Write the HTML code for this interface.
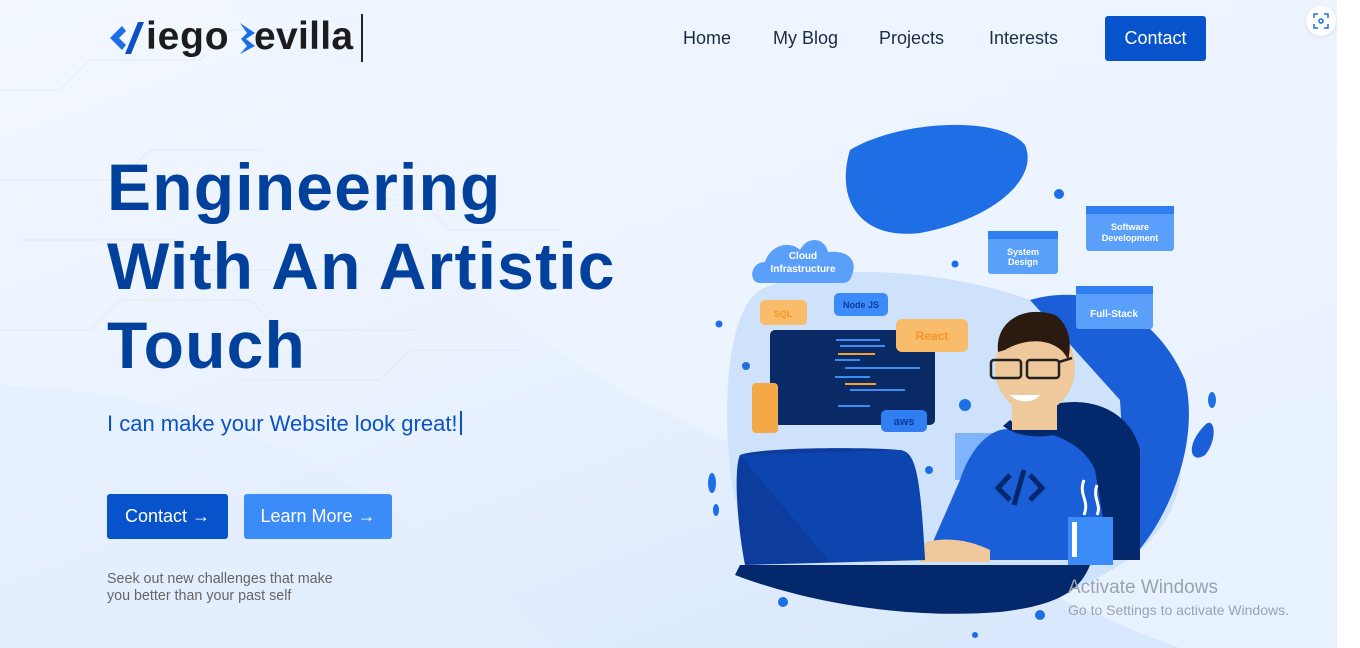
<!DOCTYPE html>
<html><head><meta charset="utf-8"><style>
*{margin:0;padding:0;box-sizing:border-box}
body{width:1360px;height:648px;overflow:hidden;background:#fff;font-family:"Liberation Sans",sans-serif;position:relative}
#pg{position:absolute;left:0;top:0;width:1337px;height:648px;background:linear-gradient(160deg,#f3f8ff 0%,#eaf2fe 45%,#d6e6fd 100%);overflow:hidden}
.nav a{position:absolute;top:28px;font-size:18px;color:#1b2a45;text-decoration:none}
h1{position:absolute;left:107px;top:148px;font-size:66px;line-height:79px;color:#01419b;font-weight:700;letter-spacing:1.2px}
.sub{position:absolute;left:107px;top:411px;font-size:22px;color:#0b52c4}
.btn{position:absolute;top:494px;height:45px;color:#fff;font-size:18px;line-height:45px;text-align:center;border-radius:3px}
.small{position:absolute;left:107px;top:571px;font-size:14.3px;line-height:17px;color:#666}
</style></head><body>
<div id="pg">
<svg width="1337" height="648" style="position:absolute;left:0;top:0">
<path d="M230 0 C330 160 480 330 700 430 C900 520 1050 600 1180 648 L1337 648 L1337 0Z" fill="#eef5ff" opacity=".7"/>
<path d="M0 385 C200 390 380 470 560 648 L0 648Z" fill="#e3eefd" opacity=".6"/>
<g stroke="#dfe8f4" stroke-width="1.2" fill="none" opacity=".7">
<path d="M0 90 H60 L90 60 H200 L230 30 H330"/><path d="M0 180 H120 L150 150 H260"/><path d="M20 240 H180 L210 270 H320"/><path d="M0 330 H90 L120 300 H250 L280 330 H420"/><path d="M240 380 H380 L410 350 H520"/><path d="M300 200 H420 L450 230 H560"/>
</g>
</svg>
<!-- logo -->
<svg width="40" height="36" style="position:absolute;left:108px;top:20px"><path d="M14 6 L2 18 L14 30 L18 25 L11 18 L18 11Z" fill="#1d6fe8"/><path d="M30 2 L17 34 L23 34 L36 2Z" fill="#0b4fc4"/></svg>
<div style="position:absolute;left:146px;top:15px;font-size:39px;font-weight:700;color:#1c1c1c;letter-spacing:0.8px">iego</div>
<svg width="22" height="36" style="position:absolute;left:237px;top:20px"><path d="M3 3 L18 13 L9 19 L18 26 L3 34 L10 26 L4 19 L10 13Z" fill="#1d6fe8"/></svg>
<div style="position:absolute;left:254px;top:15px;font-size:39px;font-weight:700;color:#1c1c1c;letter-spacing:0.3px">evilla</div>
<div style="position:absolute;left:361px;top:14px;width:1.5px;height:48px;background:#222"></div>
<div class="nav"><a style="left:683px">Home</a><a style="left:773px">My Blog</a><a style="left:879px">Projects</a><a style="left:989px">Interests</a></div>
<div style="position:absolute;left:1105px;top:16px;width:101px;height:45px;background:#0753cc;border-radius:3px;color:#fff;font-size:18px;line-height:45px;text-align:center">Contact</div>
<h1>Engineering<br>With An Artistic<br>Touch</h1>
<div class="sub">I can make your Website look great!<span style="display:inline-block;width:2px;height:24px;background:#0b52c4;vertical-align:-4px;margin-left:2px"></span></div>
<div class="btn" style="left:107px;width:121px;background:#0753cc">Contact →</div>
<div class="btn" style="left:244px;width:148px;background:#3b8bf9">Learn More →</div>
<div class="small">Seek out new challenges that make<br>you better than your past self</div>
<!-- illustration -->
<svg width="530" height="520" viewBox="700 120 530 520" style="position:absolute;left:700px;top:120px" font-family="Liberation Sans" font-weight="700">
<path d="M760 290 C820 260 950 270 1030 300 C1110 330 1190 400 1180 480 C1170 560 1060 615 920 612 C800 610 740 560 730 470 C722 390 730 310 760 290Z" fill="#cfe2fc"/>
<path d="M1030 300 C1100 280 1160 320 1185 380 C1200 440 1170 520 1130 560 L1120 400Z" fill="#1a5fd8"/>
<path d="M850 150 C900 120 1000 115 1025 145 C1040 180 990 220 920 233 C860 240 835 200 850 150Z" fill="#1e6ee6"/>
<ellipse cx="873" cy="152" rx="14" ry="6" fill="#1e6ee6" transform="rotate(-20 873 152)"/>
<path d="M735 575 C800 600 900 620 1000 612 C1060 605 1080 590 1090 565 L740 565Z" fill="#03286b"/>
<rect x="770" y="330" width="165" height="95" rx="5" fill="#0a2a66"/>
<g stroke="#3f8cf0" stroke-width="2"><line x1="836" y1="340" x2="880" y2="340"/><line x1="840" y1="346" x2="885" y2="346"/><line x1="835" y1="360" x2="860" y2="360"/><line x1="845" y1="368" x2="920" y2="368"/><line x1="835" y1="377" x2="870" y2="377"/><line x1="850" y1="390" x2="905" y2="390"/><line x1="838" y1="406" x2="870" y2="406"/></g>
<g stroke="#f5a030" stroke-width="2"><line x1="838" y1="354" x2="875" y2="354"/><line x1="845" y1="384" x2="876" y2="384"/></g>
<rect x="752" y="383" width="26" height="50" rx="4" fill="#f5a848"/>
<rect x="760" y="300" width="47" height="25" rx="5" fill="#f8bc6b"/><text x="783" y="317" font-size="9" fill="#f59a20" text-anchor="middle">SQL</text>
<rect x="834" y="293" width="54" height="23" rx="5" fill="#3b8bf9"/><text x="861" y="308" font-size="9" fill="#0b3a9b" text-anchor="middle">Node JS</text>
<rect x="896" y="319" width="72" height="33" rx="6" fill="#f8bc6b"/><text x="932" y="340" font-size="12" fill="#f5952a" text-anchor="middle">React</text>
<rect x="881" y="410" width="46" height="22" rx="5" fill="#2f7ff2"/><text x="904" y="425" font-size="11" fill="#0b3a9b" text-anchor="middle">aws</text>
<path d="M760 283 C748 283 750 262 765 262 C770 245 790 240 800 250 C808 235 825 238 828 252 C848 250 858 260 852 275 C850 283 845 283 840 283Z" fill="#5aa0fb"/>
<text x="803" y="259" font-size="10" fill="#fff" text-anchor="middle">Cloud</text><text x="803" y="272" font-size="10" fill="#fff" text-anchor="middle">Infrastructure</text>
<rect x="988" y="231" width="70" height="43" rx="3" fill="#5aa0fb"/><rect x="988" y="231" width="70" height="8" fill="#2f7ff2"/><text x="1023" y="255" font-size="9" fill="#fff" text-anchor="middle">System</text><text x="1023" y="265" font-size="9" fill="#fff" text-anchor="middle">Design</text>
<rect x="1086" y="206" width="88" height="45" rx="3" fill="#5aa0fb"/><rect x="1086" y="206" width="88" height="8" fill="#2f7ff2"/><text x="1130" y="230" font-size="9" fill="#fff" text-anchor="middle">Software</text><text x="1130" y="241" font-size="9" fill="#fff" text-anchor="middle">Development</text>
<rect x="1076" y="286" width="77" height="43" rx="3" fill="#5aa0fb"/><rect x="1076" y="286" width="77" height="8" fill="#2f7ff2"/><text x="1114" y="317" font-size="10" fill="#fff" text-anchor="middle">Full-Stack</text>
<path d="M1050 405 C1090 395 1130 410 1140 450 L1140 560 L1050 560Z" fill="#03286b"/>
<path d="M955 433 L1005 433 L1005 480 L955 480Z" fill="#7fb4fb"/>
<path d="M1000 430 C1030 425 1080 435 1095 470 L1110 560 L925 560 L960 480 C970 450 985 435 1000 430Z" fill="#1a5fd8"/>
<path d="M1003 426 C1020 440 1060 440 1075 425 L1068 420 C1050 432 1025 432 1010 420Z" fill="#03286b"/>
<rect x="1012" y="400" width="45" height="30" fill="#efc89c"/>
<ellipse cx="1035" cy="368" rx="40" ry="45" fill="#efc89c"/>
<path d="M998 352 C995 320 1025 305 1055 315 C1070 325 1072 345 1068 360 C1060 340 1030 335 1005 350Z" fill="#2b1a10"/>
<g fill="none" stroke="#222" stroke-width="2.5"><rect x="991" y="360" width="30" height="18" rx="3"/><rect x="1027" y="360" width="32" height="18" rx="3"/><line x1="1059" y1="362" x2="1072" y2="358"/></g>
<path d="M1010 395 C1020 405 1035 402 1040 395Z" fill="#fff"/>
<path d="M1010 475 L998 488 L1010 500 M1030 475 L1042 488 L1030 500 M1024 470 L1014 505" stroke="#03286b" stroke-width="5" fill="none"/>
<path d="M920 545 C940 535 970 540 990 550 L990 562 L920 562Z" fill="#efc89c"/>
<path d="M740 455 C760 447 870 447 900 450 C915 452 920 470 925 560 L745 565 C738 530 733 470 740 455Z" fill="#0c3d9e"/>
<path d="M740 455 L900 450 C915 452 920 470 925 560 L830 562Z" fill="#0e4bb8" opacity=".6"/>
<rect x="1068" y="517" width="45" height="48" fill="#3b8bf9"/><rect x="1072" y="522" width="5" height="35" fill="#fff"/>
<path d="M1084 480 C1078 495 1090 500 1084 515 M1097 485 C1092 498 1102 505 1097 515" stroke="#fff" stroke-width="3" fill="none"/>
<path d="M1205 425 C1215 415 1218 440 1205 455 C1190 465 1185 445 1205 425Z" fill="#1a5fd8"/>
<ellipse cx="1212" cy="400" rx="4" ry="8" fill="#1e6ee6"/>
<g fill="#1e6ee6"><circle cx="1059" cy="194" r="5"/><circle cx="955" cy="264" r="3.5"/><circle cx="719" cy="324" r="3.5"/><circle cx="746" cy="366" r="4"/><circle cx="965" cy="405" r="6"/><circle cx="929" cy="470" r="4"/><circle cx="783" cy="602" r="5"/><circle cx="1040" cy="615" r="5"/><circle cx="975" cy="635" r="3"/><ellipse cx="712" cy="483" rx="4" ry="10"/><ellipse cx="716" cy="510" rx="3" ry="6"/></g>
</svg>
<div style="position:absolute;left:1068px;top:577px;font-size:19px;color:#9aa3ae">Activate Windows</div>
<div style="position:absolute;left:1068px;top:602px;font-size:14px;color:#9aa3ae">Go to Settings to activate Windows.</div>
</div>
<div style="position:absolute;left:1306px;top:6px;width:30px;height:30px;border-radius:50%;background:#fff;box-shadow:0 1px 3px rgba(0,0,0,.1)"></div>
<svg width="16" height="16" style="position:absolute;left:1313px;top:13px" fill="none" stroke="#1d6fe8" stroke-width="1.5"><path d="M1 5V1H5M11 1H15V5M15 11V15H11M5 15H1V11"/><circle cx="8" cy="8" r="2"/></svg>
</body></html>
